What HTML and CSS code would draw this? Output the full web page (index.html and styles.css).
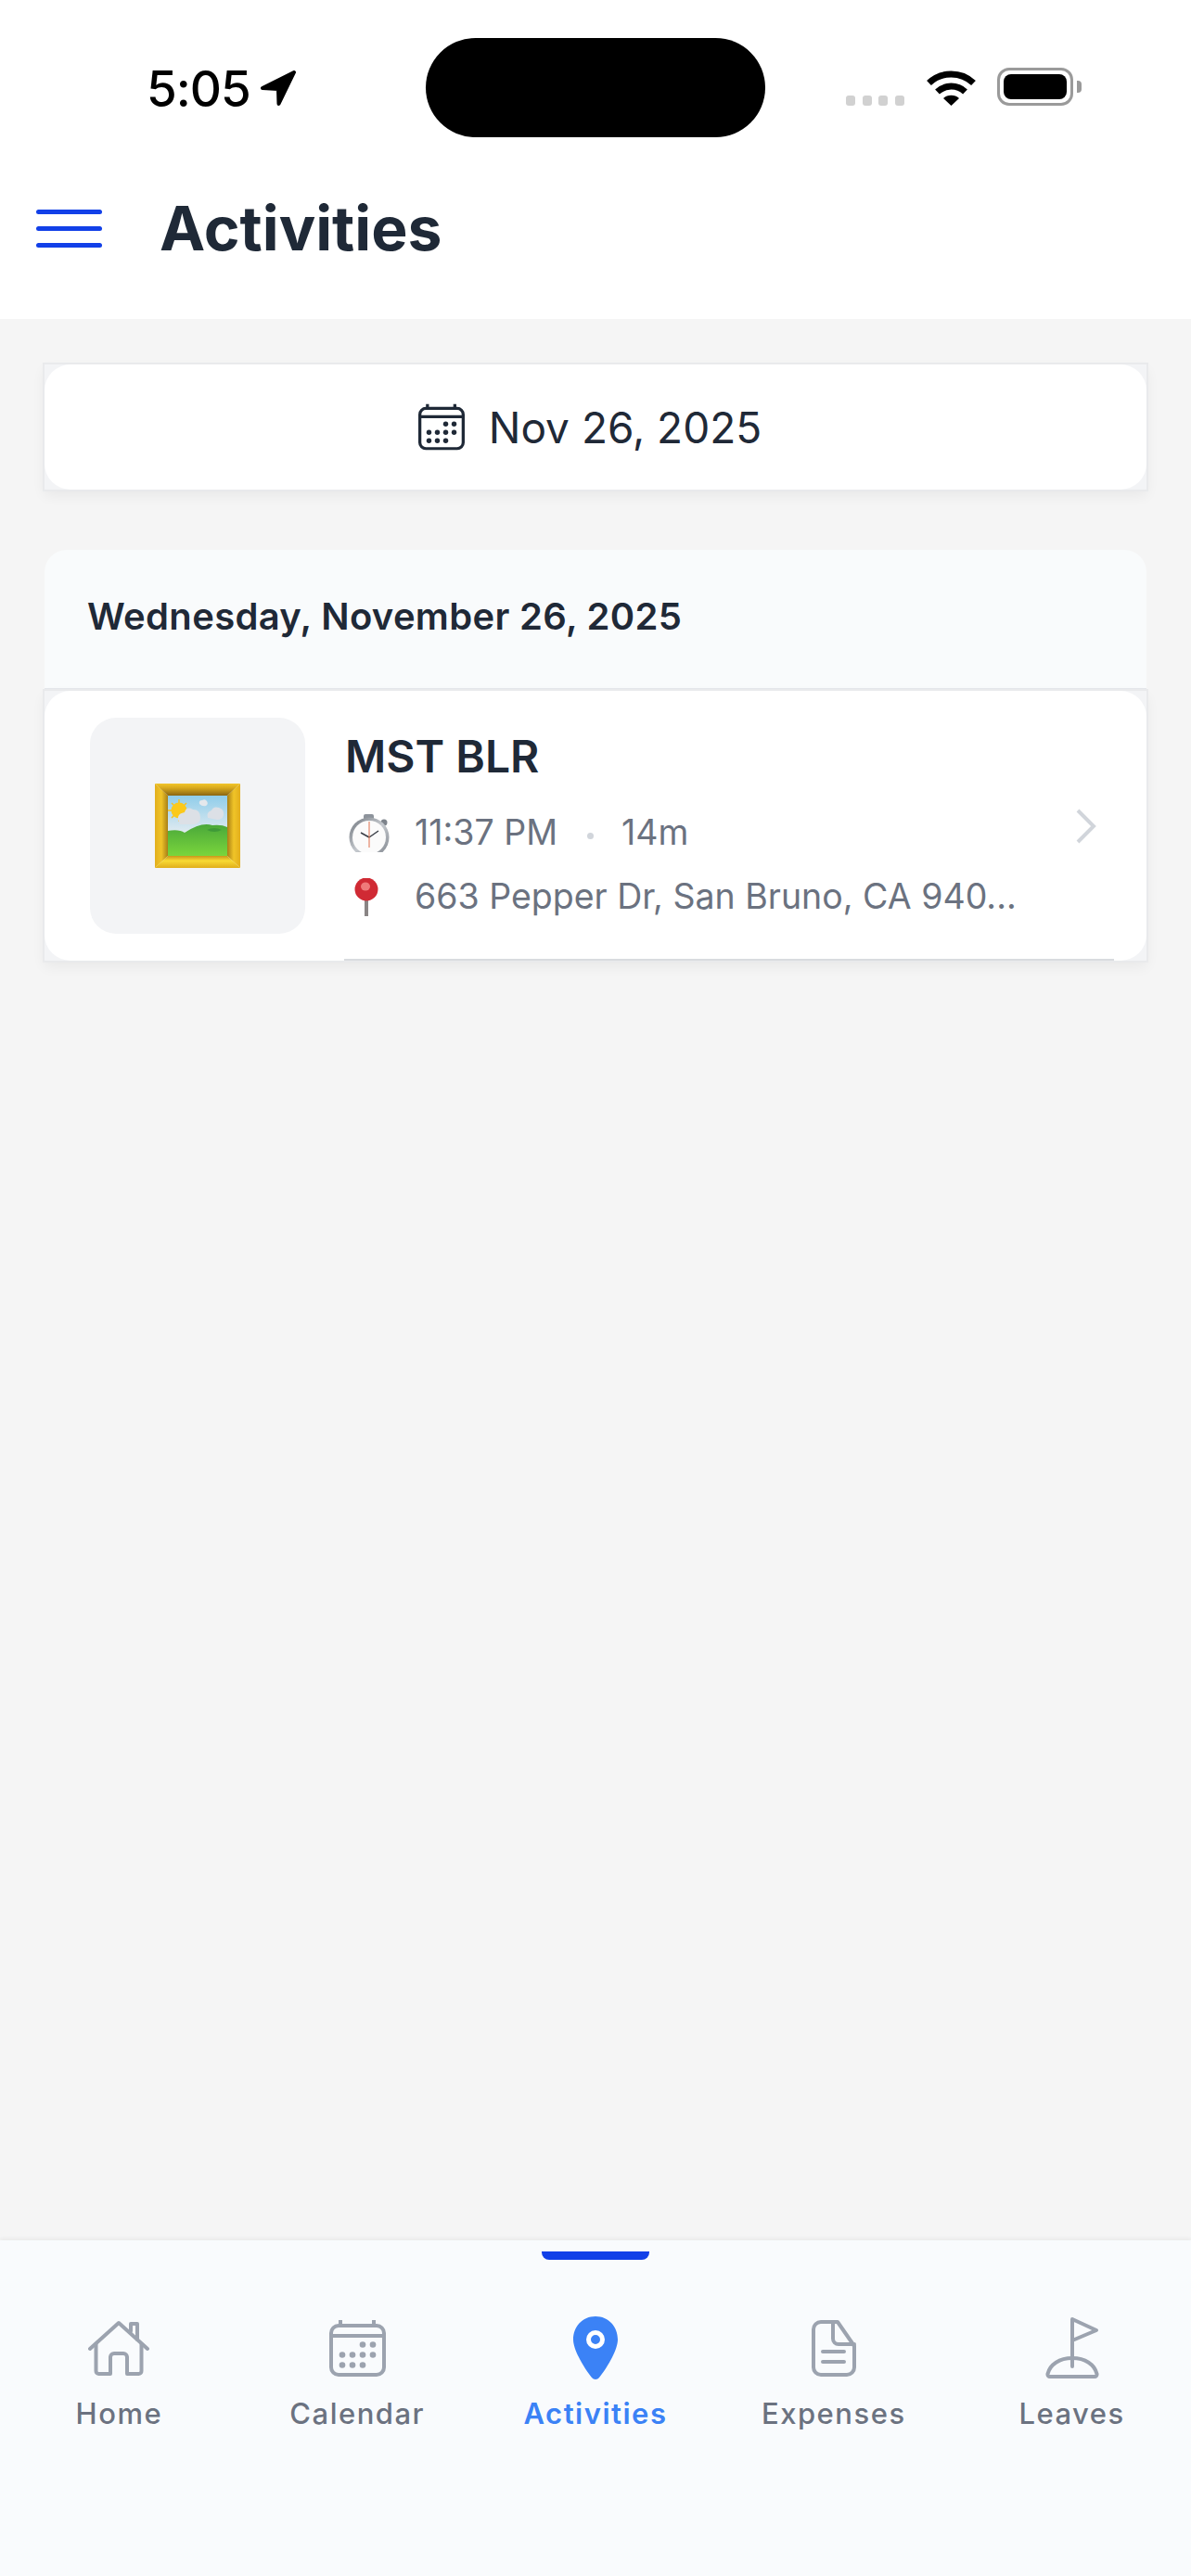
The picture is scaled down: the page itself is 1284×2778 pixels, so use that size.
FILE: index.html
```html
<!DOCTYPE html>
<html lang="en">
<head>
<meta charset="utf-8">
<title>Activities</title>
<link rel="stylesheet" href="styles.css">
</head>
<body>
<div class="app">
  <header class="top">
    <div class="status">
      <div class="status-left">
        <span class="clock">5:05</span>
        <svg class="loc" width="40" height="39" viewBox="0 0 40 39"><path d="M37 2 L3 19 L20 20 L20.5 36 Z" fill="#000" stroke="#000" stroke-width="4" stroke-linejoin="round"/></svg>
      </div>
      <div class="island"></div>
      <div class="status-right">
        <div class="cell"><i></i><i></i><i></i><i></i></div>
        <svg class="wifi" width="55" height="41" viewBox="0 0 55 41"><path d="M3.5 16.5 A35 35 0 0 1 51.5 16.5" fill="none" stroke="#000" stroke-width="7"/><path d="M12.5 26 A22 22 0 0 1 42.500 26" fill="none" stroke="#000" stroke-width="7"/><path d="M19 33 A13 13 0 0 1 36 33 L27.500 41 Z" fill="#000"/></svg>
        <div class="battery"><div class="battery-fill"></div></div>
        <div class="battery-cap"></div>
      </div>
    </div>
    <div class="appbar">
      <div class="burger"><i></i><i></i><i></i></div>
      <h1 class="title">Activities</h1>
    </div>
  </header>

  <main class="content">
    <div class="frame date-frame">
      <div class="date-btn">
        <svg class="date-ico" width="50" height="51" viewBox="0 0 61 61"><use href="#cal"/></svg>
        <span class="date-text">Nov 26, 2025</span>
      </div>
    </div>

    <section class="group">
      <div class="group-head">Wednesday, November 26, 2025</div>
      <div class="frame card-frame">
        <div class="card">
          <div class="card-row">
            <div class="thumb">
              <svg width="92" height="91" viewBox="0 0 92 91">
                <defs>
                  <linearGradient id="sky" x1="0" y1="0" x2="0" y2="1"><stop offset="0" stop-color="#8fcdea"/><stop offset="0.6" stop-color="#dfeaf0"/><stop offset="1" stop-color="#e8eef2"/></linearGradient>
                  <linearGradient id="grass" x1="0" y1="0" x2="0" y2="1"><stop offset="0" stop-color="#4aa83a"/><stop offset="1" stop-color="#7ad53c"/></linearGradient>
                  <linearGradient id="rimtop" x1="0" y1="0" x2="0" y2="1"><stop offset="0" stop-color="#f2c62a"/><stop offset="0.35" stop-color="#d9aa1e"/><stop offset="1" stop-color="#8a6612"/></linearGradient>
                  <linearGradient id="rimbot" x1="0" y1="0" x2="0" y2="1"><stop offset="0" stop-color="#c9971a"/><stop offset="0.4" stop-color="#f8da34"/><stop offset="1" stop-color="#e0ae1c"/></linearGradient>
                  <linearGradient id="rimleft" x1="0" y1="0" x2="1" y2="0"><stop offset="0" stop-color="#e2ae1c"/><stop offset="0.5" stop-color="#f0c428"/><stop offset="1" stop-color="#a87f16"/></linearGradient>
                  <linearGradient id="rimright" x1="0" y1="0" x2="1" y2="0"><stop offset="0" stop-color="#a87f16"/><stop offset="0.5" stop-color="#f0c428"/><stop offset="1" stop-color="#e2ae1c"/></linearGradient>
                </defs>
                <path d="M0 0 L14 13 V78 L0 91 Z" fill="url(#rimleft)"/>
                <path d="M92 0 L78 13 V78 L92 91 Z" fill="url(#rimright)"/>
                <path d="M0 0 H92 L78 13 H14 Z" fill="url(#rimtop)"/>
                <path d="M0 91 H92 L78 78 H14 Z" fill="url(#rimbot)"/>
                <rect x="14" y="13" width="64" height="65" fill="url(#sky)"/>
                <path d="M26 17 V41 M14 29 H38 M18 21 L34 37 M34 21 L18 37" stroke="#f9c21a" stroke-width="1.500"/>
                <circle cx="26" cy="29" r="8.500" fill="#fbc91a"/>
                <path d="M27 44 q-6 -11 5 -13 q2 -7 9 -3 q8 0 8 9 q0 6 -7 7 Z" fill="#dce0e6"/>
                <path d="M57 37 q-2 -6 4 -8 q2 -5 8 -3 q6 2 5 8 q-1 5 -7 5 Z" fill="#dce0e6"/>
                <path d="M48 22 q-1 -4 3 -4 q3 -2 5 1 q2 3 -1 5 q-4 1 -7 -2 Z" fill="#e4e8ec"/>
                <path d="M14 51 Q26 49 32 53 Q50 41 62 45 Q72 44 78 47 V78 H14 Z" fill="url(#grass)"/>
                <path d="M56 50 q8 -4 16 0 q-8 4 -16 0 Z" fill="#3f9a38"/>
              </svg>
            </div>
            <div class="info">
              <div class="name">MST BLR</div>
              <div class="meta meta-time">
                <svg class="emoji" width="46" height="41" viewBox="0 0 46 41">
                  <defs><linearGradient id="steel" x1="0" y1="0" x2="1" y2="1"><stop offset="0" stop-color="#6f757d"/><stop offset="0.5" stop-color="#c5c9ce"/><stop offset="1" stop-color="#7d838b"/></linearGradient></defs>
                  <rect x="17" y="0" width="11" height="6" rx="2" fill="#8d939b"/>
                  <circle cx="39" cy="9" r="3.500" fill="#7d838b"/>
                  <circle cx="23" cy="25" r="21.500" fill="url(#steel)"/>
                  <circle cx="23" cy="25" r="18" fill="#fbfbfb"/>
                  <path d="M23 25 L14 20 M23 25 L33 18" stroke="#3a3f47" stroke-width="1.500"/>
                  <path d="M23 8 V36" stroke="#e0704c" stroke-width="1"/>
                </svg>
                <span>11:37 PM</span>
                <i class="sep"></i>
                <span>14m</span>
              </div>
              <div class="meta meta-addr">
                <svg class="emoji pin" width="30" height="41" viewBox="0 0 30 41">
                  <rect x="13" y="20" width="4" height="21" fill="#8a8585"/>
                  <circle cx="15" cy="12" r="12.500" fill="#d02a34"/>
                  <ellipse cx="14" cy="9" rx="5" ry="4.500" fill="#ef7a7a"/>
                </svg>
                <span>663 Pepper Dr, San Bruno, CA 940...</span>
              </div>
            </div>
            <svg class="chev" width="22" height="38" viewBox="0 0 22 38"><path d="M2 2 L19 19 L2 36" fill="none" stroke="#d1d5db" stroke-width="4"/></svg>
          </div>
          <div class="rule"></div>
        </div>
      </div>
    </section>
  </main>

  <nav class="tabs">
    <a class="tab">
      <span class="tab-ico"><svg width="66" height="62" viewBox="0 0 66 62" fill="none" stroke="#9ca3af" stroke-width="4" stroke-linecap="round" stroke-linejoin="round"><path d="M2 32 L33 4 L64 32"/><path d="M8.500 27 V56 a3 3 0 0 0 3 3 H24 V41 a4 4 0 0 1 4-4 h10 a4 4 0 0 1 4 4 V59 H54.500 a3 3 0 0 0 3-3 V27"/><path d="M46 13 V5 h7 V22"/></svg></span>
      <span class="tab-label">Home</span>
    </a>
    <a class="tab">
      <span class="tab-ico"><svg class="cal-grey" width="61" height="61" viewBox="0 0 61 61"><use href="#cal"/></svg></span>
      <span class="tab-label">Calendar</span>
    </a>
    <a class="tab tab-active">
      <i class="indicator"></i>
      <span class="tab-ico"><svg width="48" height="68" viewBox="0 0 48 68"><path d="M24 0 C38 0 48 11 48 25 C48 38 33 60 28 66 C26 68.500 22 68.500 20 66 C15 60 0 38 0 25 C0 11 10 0 24 0 Z" fill="#3b82f6"/><circle cx="24" cy="25" r="7.500" fill="none" stroke="#fff" stroke-width="5"/></svg></span>
      <span class="tab-label">Activities</span>
    </a>
    <a class="tab">
      <span class="tab-ico"><svg width="48" height="61" viewBox="0 0 48 61" fill="none" stroke="#9ca3af" stroke-width="4" stroke-linecap="round" stroke-linejoin="round"><path d="M10 2 H28 L46 28 V51 a8 8 0 0 1-8 8 H10 a8 8 0 0 1-8-8 V10 a8 8 0 0 1 8-8 Z"/><path d="M23 2 V20 a6 6 0 0 0 6 6 H46"/><path d="M12 34 H35 M12 45 H35"/></svg></span>
      <span class="tab-label">Expenses</span>
    </a>
    <a class="tab">
      <span class="tab-ico"><svg width="58" height="66" viewBox="0 0 58 66" fill="none" stroke="#9ca3af" stroke-width="4" stroke-linecap="round" stroke-linejoin="round"><path d="M29 53 V2 L55 14 L29 25"/><path d="M5 64 a2.500 2.500 0 0 1-2.500-3 C5 51 15 44 29 44 C43 44 53 51 55.500 61 a2.500 2.500 0 0 1-2.500 3 Z"/></svg></span>
      <span class="tab-label">Leaves</span>
    </a>
  </nav>
</div>

<svg class="defs" width="0" height="0">
  <symbol id="cal" viewBox="0 0 61 61">
    <g fill="none" stroke="currentColor" stroke-width="4">
      <rect x="2" y="6" width="57" height="53" rx="8"/>
      <path d="M2 17 H59 M12 0 V6 M48 0 V6"/>
    </g>
    <g fill="currentColor">
      <circle cx="36" cy="26.500" r="3.300"/><circle cx="47" cy="26.500" r="3.300"/>
      <circle cx="14" cy="37.500" r="3.300"/><circle cx="25" cy="37.500" r="3.300"/><circle cx="36" cy="37.500" r="3.300"/><circle cx="47" cy="37.500" r="3.300"/>
      <circle cx="14" cy="48.500" r="3.300"/><circle cx="25" cy="48.500" r="3.300"/><circle cx="36" cy="48.500" r="3.300"/>
    </g>
  </symbol>
</svg>
</body>
</html>
```

FILE: styles.css
```css
* { box-sizing: border-box; }
html, body { margin: 0; padding: 0; }
body { font-family: Inter, "Liberation Sans", sans-serif; background: #f5f5f5; color: #1f2937; }
i { display: block; }
.defs { position: absolute; }

.app { height: 2778px; display: flex; flex-direction: column; overflow: hidden; }

.top { background: #fff; height: 344px; flex: none; }
.status { height: 148px; display: grid; grid-template-columns: 1fr 366px 1fr; }
.status-left { display: flex; align-items: flex-start; padding: 69px 0 0 158px; gap: 10px; }
.clock { font-size: 53px; line-height: 54px; font-weight: 500; color: #000; letter-spacing: -1px; }
.loc { margin-top: 7px; }
.island { margin-top: 41px; height: 107px; background: #000; border-radius: 54px; }
.status-right { display: flex; align-items: flex-start; padding: 73px 0 0 87px; }
.cell { display: flex; gap: 7.500px; margin-top: 30px; }
.cell i { width: 10px; height: 11px; border-radius: 3px; background: #d1d1d1; }
.wifi { margin-left: 23px; }
.battery { margin-left: 22px; width: 82px; height: 41px; border: 3px solid #9a9a9a; border-radius: 13px; padding: 4px; }
.battery-fill { height: 100%; background: #000; border-radius: 8px; }
.battery-cap { width: 5px; height: 13px; margin: 14px 0 0 4px; background: #9a9a9a; border-radius: 0 4px 4px 0; }

.appbar { height: 196px; display: flex; align-items: center; padding-left: 39px; gap: 62px; }
.burger { width: 71px; display: flex; flex-direction: column; gap: 13px; }
.burger i { height: 5px; border-radius: 3px; background: #1240e8; }
.title { margin: 0; font-size: 66px; line-height: 76px; font-weight: 700; color: #1f2937; }

.content { flex: 1; padding: 49px 48px 0; display: flex; flex-direction: column; gap: 65px; }
.frame { background: #f3f4f6; box-shadow: 0 0 0 2px #e9eaec, 0 6px 14px rgba(0, 0, 0, 0.06); }
.date-btn { height: 135px; padding-right: 12px; background: #fff; border-radius: 28px; display: flex; align-items: center; justify-content: center; gap: 26px; }
.date-ico { color: #1f2937; }
.date-text { font-size: 46px; font-weight: 400; color: #1f2937; }

.group { display: flex; flex-direction: column; }
.group-head { height: 152px; padding: 0 46px 6px; display: flex; align-items: center; background: #f9fbfc; border-radius: 24px 24px 0 0; border-bottom: 3px solid #e5e7eb; font-size: 40px; font-weight: 600; letter-spacing: 0.320px; color: #1f2937; }
.card { background: #fff; border-radius: 28px; height: 291px; display: flex; flex-direction: column; }
.card-row { flex: 1; display: flex; padding: 29px 0 0 49px; }
.thumb { width: 232px; height: 233px; border-radius: 28px; background: #f3f4f6; display: flex; align-items: center; justify-content: center; flex: none; }
.info { margin-left: 43px; flex: 1; min-width: 0; }
.name { font-size: 48px; line-height: 56px; font-weight: 600; color: #1f2937; margin-top: 14px; }
.meta { display: flex; align-items: center; font-size: 37.500px; line-height: 44px; color: #6b7280; }
.meta-time { margin-top: 32px; }
.meta-addr { margin-top: 25px; }
.emoji { flex: none; margin: 0 26px 0 3px; }
.pin { margin: 0 37px 0 8px; }
.sep { width: 7px; height: 7px; border-radius: 50%; background: #d1d5db; margin: 6px 30px 0 32px; }
.chev { flex: none; margin: 98px 54px 0 0; }
.rule { height: 2px; margin: 0 35px 0 323px; background: #d9dbdf; }

.tabs { height: 362px; flex: none; background: #f9fbfd; display: grid; grid-template-columns: repeat(5, 1fr); box-shadow: 0 -2px 4px rgba(0, 0, 0, 0.05); position: relative; }
.tab { position: relative; display: flex; flex-direction: column; align-items: center; padding-top: 81px; }
.tab-ico { height: 70px; display: flex; align-items: center; justify-content: center; }
.tab-label { margin-top: 16px; font-size: 31px; line-height: 40px; font-weight: 500; color: #6b7280; letter-spacing: 1.500px; }
.tab-active .tab-label { color: #3b82f6; font-weight: 600; }
.cal-grey { color: #9ca3af; }
.indicator { position: absolute; top: 12px; left: 50%; width: 116px; height: 9px; margin-left: -58px; background: #1240e8; border-radius: 0 0 8px 8px; }
```
